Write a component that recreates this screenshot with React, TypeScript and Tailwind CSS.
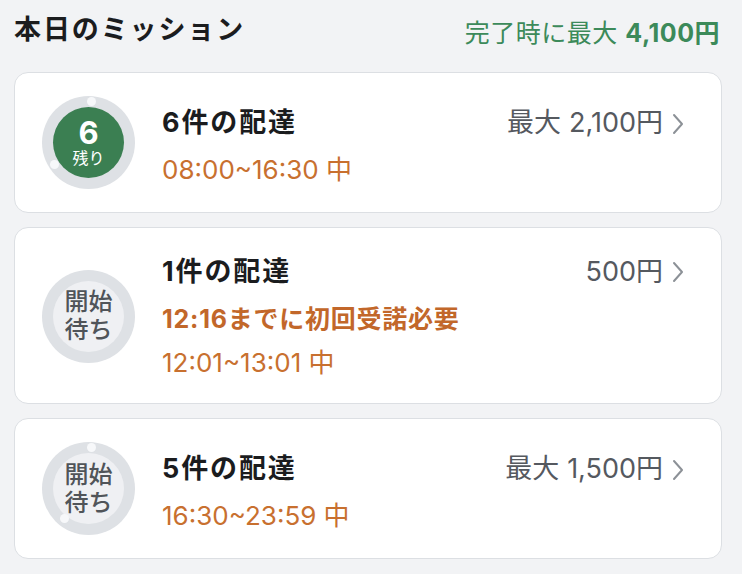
import React from 'react';

type Dot = { left: number; top: number };

type Mission = {
  title: string;
  price: string;
  prefix?: string;
  warning?: string;
  time: string;
  status: 'active' | 'waiting';
  remaining?: number;
  dots: Dot[];
};

const missions: Mission[] = [
  {
    title: '6件の配達',
    prefix: '最大',
    price: '2,100円',
    time: '08:00~16:30 中',
    status: 'active',
    remaining: 6,
    dots: [
      { left: 45, top: 1 },
      { left: 8, top: 64 },
    ],
  },
  {
    title: '1件の配達',
    price: '500円',
    warning: '12:16までに初回受諾必要',
    time: '12:01~13:01 中',
    status: 'waiting',
    dots: [],
  },
  {
    title: '5件の配達',
    prefix: '最大',
    price: '1,500円',
    time: '16:30~23:59 中',
    status: 'waiting',
    dots: [
      { left: 45, top: 1 },
      { left: 18, top: 72 },
    ],
  },
];

function ProgressBadge({ m }: { m: Mission }) {
  return (
    <div className="relative w-[93px] h-[93px] shrink-0 rounded-full bg-[#dee1e5] flex items-center justify-center">
      {m.dots.map((d, i) => (
        <span
          key={i}
          className="absolute w-[9px] h-[9px] rounded-full bg-[#f7f8fa]"
          style={{ left: d.left, top: d.top }}
        />
      ))}
      {m.status === 'active' ? (
        <div className="w-[71px] h-[71px] rounded-full bg-[#3b7f52] flex flex-col items-center justify-center text-white">
          <span className="text-[31px] leading-[31px] font-bold">{m.remaining}</span>
          <span className="text-[16px] leading-[19px] mt-[1px]">残り</span>
        </div>
      ) : (
        <div className="w-[71px] h-[71px] rounded-full bg-[#eff0f3] flex flex-col items-center justify-center text-[#505459]">
          <span className="text-[24px] leading-[28px] font-medium">開始</span>
          <span className="text-[24px] leading-[28px] font-medium">待ち</span>
        </div>
      )}
    </div>
  );
}

function Chevron() {
  return (
    <svg width="12" height="22" viewBox="0 0 12 22" fill="none" className="ml-[9px]">
      <polyline points="2,2 10,11 2,20" stroke="#8c9197" strokeWidth="2" strokeLinecap="round" strokeLinejoin="round" />
    </svg>
  );
}

function MissionCard({ m }: { m: Mission }) {
  const tall = !!m.warning;
  return (
    <div
      className={`bg-white border border-[#dcdfe3] rounded-[14px] flex items-center pl-[27px] pr-[37px] ${
        tall ? 'pt-[27px] pb-[26px]' : 'py-[23px]'
      }`}
    >
      <ProgressBadge m={m} />
      <div className={`flex-1 ml-[27px] flex flex-col ${tall ? '' : 'pt-[6px]'}`}>
        <div className="flex items-center justify-between h-[34px]">
          <span className="text-[27px] font-bold text-[#1b1c1e] tracking-[0.07em]">{m.title}</span>
          <div className="flex items-center text-[#55595f] text-[27px]">
            {m.prefix && <span className="mr-[8px]">{m.prefix}</span>}
            <span>{m.price}</span>
            <Chevron />
          </div>
        </div>
        {m.warning && (
          <div className="mt-[16px] h-[30px] flex items-center text-[25px] font-bold text-[#c2672a] tracking-[0.03em]">
            {m.warning}
          </div>
        )}
        <div
          className={`${tall ? 'mt-[12px]' : 'mt-[14px]'} h-[30px] flex items-center text-[26px] text-[#c8702f]`}
        >
          {m.time}
        </div>
      </div>
    </div>
  );
}

export default function App() {
  return (
    <div
      className="min-h-screen bg-[#f2f3f5] pl-[14px] pr-[20px] pb-4"
      style={{ fontFamily: 'Inter, "Noto Sans CJK JP", sans-serif' }}
    >
      <div className="flex items-start justify-between h-[72px]">
        <h1 className="mt-[12px] text-[27px] leading-[36px] font-semibold text-[#1b1c1e] tracking-[0.07em]">
          本日のミッション
        </h1>
        <div className="mt-[15px] leading-[36px] text-[25px] text-[#3c8a5a] mr-[2px] tracking-[0.02em]">
          完了時に最大 <span className="font-bold">4,100円</span>
        </div>
      </div>
      <div className="flex flex-col gap-[14px]">
        {missions.map((m) => (
          <MissionCard key={m.title} m={m} />
        ))}
      </div>
    </div>
  );
}
